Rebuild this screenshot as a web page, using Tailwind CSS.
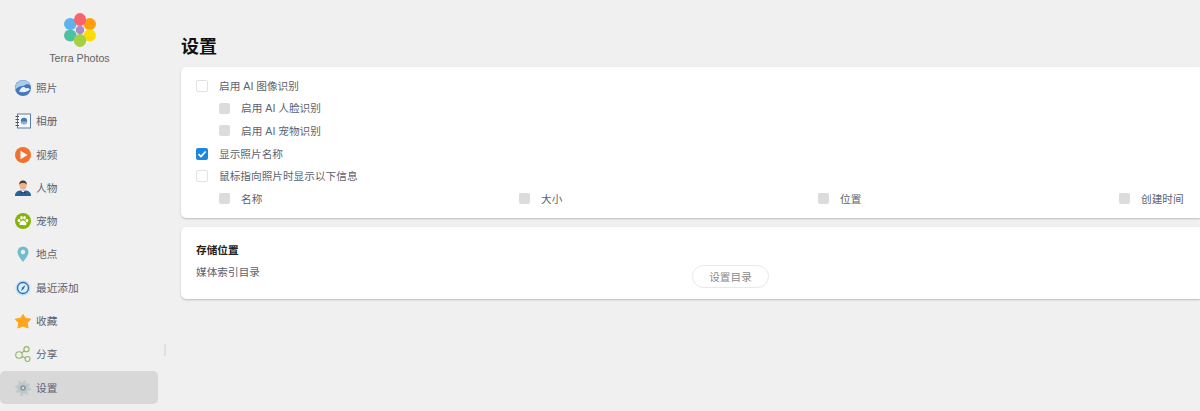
<!DOCTYPE html>
<html lang="zh-CN">
<head>
    <meta charset="UTF-8">
    <title>Terra Photos</title>
    <script src="https://cdn.jsdelivr.net/npm/@tailwindcss/browser@4"></script>
</head>
<body class="bg-[#f0f0f0] overflow-hidden font-['Liberation_Sans','Noto_Sans_CJK_SC',sans-serif] text-[#5c6270] text-[10.67px] leading-[14px]">
<div class="flex h-[411px] w-[1200px] overflow-hidden">
    <!-- sidebar -->
    <aside class="relative w-[181px] shrink-0">
        <div class="flex flex-col items-center w-[159px] pt-[13px]">
            <svg width="32" height="34" viewBox="0 0 32 34">
                <ellipse cx="6.300" cy="11" rx="6.300" ry="6" fill="#5fb2ee"/>
                <ellipse cx="25.700" cy="11" rx="6.300" ry="6" fill="#ff9f0e"/>
                <ellipse cx="6.300" cy="22.500" rx="6.300" ry="6" fill="#4ec1a2"/>
                <ellipse cx="25.700" cy="22.500" rx="6.300" ry="6" fill="#fddc0a"/>
                <ellipse cx="16" cy="6.500" rx="6" ry="6.500" fill="#f9636b"/>
                <ellipse cx="16" cy="27.500" rx="6.200" ry="6.500" fill="#a6d043"/>
                <circle cx="16" cy="17" r="4.200" fill="#a88cc8"/>
            </svg>
            <div class="mt-[4px] text-[10.67px] leading-[14px] text-[#5f6368] font-['Liberation_Sans']">Terra Photos</div>
        </div>
        <nav class="flex flex-col mt-[6.3px] w-[158px]">
            <a class="flex items-center gap-[5px] h-[33.3px] pl-[15px]">
                <svg width="16" height="16" viewBox="0 0 16 16"><circle cx="8" cy="8" r="8" fill="#4577bb"/><path d="M.3 9.500A8 8 0 0 1 15.500 5C13 3.500 10.500 4 8.500 6 5.500 5.500 3 7 .3 9.500Z" fill="#a9cbed"/><path d="M4 11.500c1.500-3 3-5 5-4.500 1 .3 1.500 1 2 1.500 1-.7 2.500-.5 4 .7-1 2-6 4-11 2.300Z" fill="#e8f2fb"/></svg>
                <span>照片</span>
            </a>
            <a class="flex items-center gap-[5px] h-[33.3px] pl-[15px]">
                <svg width="16" height="16" viewBox="0 0 16 16"><rect x="2.500" y="1" width="13" height="14" fill="#f5f8fb" stroke="#5b7ea6"/><circle cx="9" cy="8" r="3.200" fill="#4b76ad"/><path d="M6 8.500h6a3 3 0 0 1-6 0Z" fill="#8fb2d6"/><path d="M0.500 3.500h3.500M0.500 6.500h3.500M0.500 9.500h3.500M0.500 12.500h3.500" stroke="#44566b"/></svg>
                <span>相册</span>
            </a>
            <a class="flex items-center gap-[5px] h-[33.3px] pl-[15px]">
                <svg width="16" height="16" viewBox="0 0 16 16"><circle cx="8" cy="8" r="8" fill="#f0722e"/><path d="M5.500 3.700 12.500 8l-7 4.300Z" fill="#fff"/></svg>
                <span>视频</span>
            </a>
            <a class="flex items-center gap-[5px] h-[33.3px] pl-[15px]">
                <svg width="16" height="16" viewBox="0 0 16 16"><path d="M0 16c0-3.500 2-5 5-5.500h6c3 .5 5 2 5 5.500Z" fill="#2a6296"/><path d="M6 10.500h4L8 13Z" fill="#fff"/><path d="M6 11.500 8 12.500l2-1v2l-2-.8-2 .8Z" fill="#17324f"/><ellipse cx="8" cy="5.500" rx="3.500" ry="4.200" fill="#e9b48c"/><path d="M4.300 5C4 1.500 6 .5 8 .5s4 1 3.700 4.500C11 3.500 10 3 8 3S5 3.500 4.300 5Z" fill="#5b3a24"/></svg>
                <span>人物</span>
            </a>
            <a class="flex items-center gap-[5px] h-[33.3px] pl-[15px]">
                <svg width="16" height="16" viewBox="0 0 16 16"><circle cx="8" cy="8" r="8" fill="#86b30b"/><ellipse cx="4" cy="7.500" rx="1.300" ry="1.700" fill="#fff"/><ellipse cx="6.500" cy="4.800" rx="1.300" ry="1.800" fill="#fff"/><ellipse cx="9.500" cy="4.800" rx="1.300" ry="1.800" fill="#fff"/><ellipse cx="12" cy="7.500" rx="1.300" ry="1.700" fill="#fff"/><path d="M8 7.500c2 0 3.500 2 3.500 3.500S9.500 12.500 8 12s-3.500 1-3.500-1S6 7.500 8 7.500Z" fill="#fff"/></svg>
                <span>宠物</span>
            </a>
            <a class="flex items-center gap-[5px] h-[33.3px] pl-[15px]">
                <svg width="16" height="16" viewBox="0 0 16 16"><path d="M8 16C5.500 12.500 2.500 9.500 2.500 6a5.500 5.500 0 0 1 11 0c0 3.500-3 6.500-5.500 10Z" fill="#72bcd0"/><circle cx="8" cy="6" r="2.200" fill="#e4f3f7"/></svg>
                <span>地点</span>
            </a>
            <a class="flex items-center gap-[5px] h-[33.3px] pl-[15px]">
                <svg width="16" height="16" viewBox="0 0 16 16"><circle cx="8" cy="8" r="7.500" fill="#bcdcf6"/><circle cx="8" cy="8" r="5.500" fill="#dcecfa" stroke="#2d6fb3" stroke-width="1.300"/><path d="M10.500 4.800 8.800 8.800 6 11l1.200-3.500Z" fill="#2d6fb3"/></svg>
                <span>最近添加</span>
            </a>
            <a class="flex items-center gap-[5px] h-[33.3px] pl-[15px]">
                <svg width="16" height="16" viewBox="0 0 16 16"><path d="M8 1.500l2.300 3.700 5.500 1-3.600 3.700.9 5.100L8 13l-5.100 2 .9-5.100L.2 6.200l5.500-1Z" fill="#fca61e" stroke="#fca61e" stroke-linejoin="round"/></svg>
                <span>收藏</span>
            </a>
            <a class="flex items-center gap-[5px] h-[33.3px] pl-[15px]">
                <svg width="16" height="16" viewBox="0 0 16 16" fill="none" stroke="#93b36a" stroke-width="1.100"><circle cx="4" cy="9" r="3.300"/><circle cx="11.500" cy="3.200" r="2.600"/><circle cx="12.500" cy="13" r="2.500"/><path d="M6.500 7 9.500 4.700M7 10.500l3.400 1.400"/></svg>
                <span>分享</span>
            </a>
            <a class="flex items-center gap-[5px] h-[33.3px] pl-[15px] rounded-[5px] bg-[#d8d8d8]">
                <svg width="16" height="16" viewBox="0 0 16 16"><circle cx="8" cy="8" r="5.800" fill="#bcc8cc"/><circle cx="8" cy="8" r="6.600" fill="none" stroke="#bcc8cc" stroke-width="2.400" stroke-dasharray="2.590 2.590"/><circle cx="8" cy="8" r="2.800" fill="#8a979b"/><circle cx="8" cy="8" r="1.200" fill="#d8d8d8"/></svg>
                <span>设置</span>
            </a>
        </nav>
        <div class="absolute left-[164px] top-[344px] w-[2px] h-[12px] bg-[#e0e0e0]"></div>
    </aside>

    <!-- main -->
    <main class="flex-1 min-w-0">
        <h1 class="mt-[36px] text-[18px] leading-[22px] font-bold text-[#111111]">设置</h1>
        <section class="mt-[9px] bg-white rounded-l-[5px] shadow-[0_1px_2px_rgba(0,0,0,0.22)] h-[151px] pl-[15px] pt-[7.5px]">
            <div class="flex items-center h-[22.6px] gap-[11px]"><span class="w-[12px] h-[12px] rounded-[2px] border border-[#e2e2e2] bg-white"></span><span>启用 AI 图像识别</span></div>
            <div class="flex items-center h-[22.6px] gap-[11px] pl-[23px]"><span class="w-[11px] h-[11px] rounded-[2px] bg-[#dcdcdc]"></span><span>启用 AI 人脸识别</span></div>
            <div class="flex items-center h-[22.6px] gap-[11px] pl-[23px]"><span class="w-[11px] h-[11px] rounded-[2px] bg-[#dcdcdc]"></span><span>启用 AI 宠物识别</span></div>
            <div class="flex items-center h-[22.6px] gap-[11px]">
                <span class="flex items-center justify-center w-[12px] h-[12px] rounded-[2px] bg-[#1a87e0]"><svg width="10" height="10" viewBox="0 0 10 10" fill="none" stroke="#fff" stroke-width="1.700"><path d="M1.500 5.200 4 7.600 8.600 2.500"/></svg></span>
                <span>显示照片名称</span>
            </div>
            <div class="flex items-center h-[22.6px] gap-[11px]"><span class="w-[12px] h-[12px] rounded-[2px] border border-[#e2e2e2] bg-white"></span><span>鼠标指向照片时显示以下信息</span></div>
            <div class="grid grid-cols-[300px_299px_301px_80px] h-[22.6px] pl-[23px]">
                <div class="flex items-center gap-[11px]"><span class="w-[11px] h-[11px] rounded-[2px] bg-[#dcdcdc]"></span><span>名称</span></div>
                <div class="flex items-center gap-[11px]"><span class="w-[11px] h-[11px] rounded-[2px] bg-[#dcdcdc]"></span><span>大小</span></div>
                <div class="flex items-center gap-[11px]"><span class="w-[11px] h-[11px] rounded-[2px] bg-[#dcdcdc]"></span><span>位置</span></div>
                <div class="flex items-center gap-[11px]"><span class="w-[11px] h-[11px] rounded-[2px] bg-[#dcdcdc]"></span><span>创建时间</span></div>
            </div>
        </section>
        <section class="relative mt-[9px] bg-white rounded-l-[5px] shadow-[0_1px_2px_rgba(0,0,0,0.22)] h-[72px] pl-[15px] pt-[16px]">
            <div class="font-bold text-[#222222]">存储位置</div>
            <div class="mt-[8px]">媒体索引目录</div>
            <button class="absolute left-[511px] top-[38px] w-[77px] h-[23px] rounded-full border border-[#e8e8e8] text-[#8a8a8a] bg-white">设置目录</button>
        </section>
    </main>
</div>
</body>
</html>
